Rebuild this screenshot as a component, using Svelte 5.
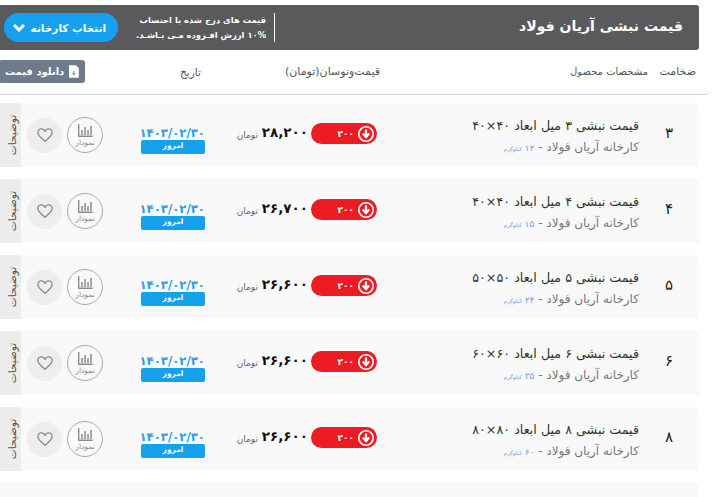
<script>
	const rows = [
		{ thick: '۳', size: '۴۰×۴۰', weight: '۱۲', price: '۲۸,۲۰۰' },
		{ thick: '۴', size: '۴۰×۴۰', weight: '۱۵', price: '۲۶,۷۰۰' },
		{ thick: '۵', size: '۵۰×۵۰', weight: '۲۴', price: '۲۶,۶۰۰' },
		{ thick: '۶', size: '۶۰×۶۰', weight: '۳۵', price: '۲۶,۶۰۰' },
		{ thick: '۸', size: '۸۰×۸۰', weight: '۶۰', price: '۲۶,۶۰۰' }
	];
</script>

<div class="page" dir="rtl">
	<header class="top">
		<h1>قیمت نبشی آریان فولاد</h1>
		<div class="top-left">
			<p class="notice">قیمت های درج شده با احتساب<br />۱۰% ارزش افـزوده مـی بـاشـد.</p>
			<button class="factory">
				انتخاب کارخانه
				<svg width="14" height="10" viewBox="0 0 14 10"><path d="M2 2l5 5 5-5" fill="none" stroke="#fff" stroke-width="3" /></svg>
			</button>
		</div>
	</header>

	<div class="heads">
		<span class="h-thick">ضخامت</span>
		<span class="h-spec">مشخصات محصول</span>
		<span class="h-price">قیمت‌ونوسان(تومان)</span>
		<span class="h-date">تاریخ</span>
		<button class="download">
			<svg width="10" height="13" viewBox="0 0 10 13"><path d="M0 0h7l3 3v10H0z" fill="#fff" /><path d="M5 6v4M3.400 8.400L5 10l1.600-1.600" fill="none" stroke="#6f7b8d" stroke-width="1" /></svg>
			دانلود قیمت
		</button>
	</div>

	{#each rows as row}
		<div class="row">
			<div class="thick">{row.thick}</div>
			<div class="product">
				<div class="name">قیمت نبشی {row.thick} میل ابعاد {row.size}</div>
				<div class="maker">کارخانه آریان فولاد - <span class="kg">{row.weight} <small>کیلوگرم</small></span></div>
			</div>
			<div class="change">
				<svg width="18" height="18" viewBox="0 0 18 18"><circle cx="9" cy="9" r="7.200" fill="none" stroke="#fff" stroke-width="1.600" /><path d="M9 4.500v7M5.800 8.500L9 12l3.200-3.500" fill="none" stroke="#fff" stroke-width="2.200" /></svg>
				<span>۲۰۰</span>
			</div>
			<div class="price">{row.price}</div>
			<div class="toman">تومان</div>
			<div class="date">
				<div class="day">۱۴۰۳/۰۲/۳۰</div>
				<div class="today">امروز</div>
			</div>
			<div class="chart">
				<svg width="15" height="13" viewBox="0 0 15 13"><path d="M.7 0v12.300h14" fill="none" stroke="#8d8d8d" stroke-width="1.400" /><path d="M3 6h2v5H3zM6 3h2v8H6zM9 6h2v5H9zM12 2h2v9h-2z" fill="#a5a5a5" /></svg>
				<span>نمودار</span>
			</div>
			<div class="heart">
				<svg width="16" height="15" viewBox="0 0 18 16"><path d="M9 14.500C4 10.500 1 8 1 5a3.800 3.800 0 0 1 8-1 3.800 3.800 0 0 1 8 1c0 3-3 5.500-8 9.500z" fill="none" stroke="#8a8a8a" stroke-width="1.500" /></svg>
			</div>
			<div class="notes"><span>توضیحات</span></div>
		</div>
	{/each}
	<div class="row last"></div>
</div>

<style>
	:global(body) {
		margin: 0;
		overflow: hidden;
		height: 497px;
		background: #fff;
	}
	.page {
		width: 699px;
		height: 497px;
		padding-top: 5px;
		box-sizing: border-box;
		font-family: "DejaVu Sans", sans-serif;
		color: #333;
	}
	.top {
		height: 45px;
		background: #5a5a5c;
		border-radius: 0 3px 3px 0;
		display: flex;
		justify-content: space-between;
		align-items: center;
		padding: 0 16px 0 4px;
	}
	h1 {
		margin: -4px 0 0;
		font-size: 14px;
		font-weight: 700;
		color: #fff;
	}
	.top-left {
		display: flex;
		align-items: center;
	}
	.notice {
		margin: 0 0 0 18px;
		padding-right: 8px;
		border-right: 1px solid #fff;
		font-size: 8.400px;
		font-weight: 700;
		line-height: 15px;
		color: #fff;
		height: 29px;
		white-space: nowrap;
	}
	.factory {
		width: 114px;
		height: 29px;
		border: 0;
		border-radius: 15px;
		background: #17a0ed;
		color: #fff;
		font: 700 10.500px "DejaVu Sans", sans-serif;
		display: flex;
		align-items: center;
		justify-content: space-between;
		padding: 0 12px 0 8px;
		white-space: nowrap;
	}
	.heads {
		height: 45px;
		width: 710px;
		margin-left: -11px;
		box-sizing: border-box;
		transform: translateX(11px);
		border-bottom: 1.500px solid #d2d2d2;
		border-radius: 0 0 5px 0;
		font-size: 10px;
		color: #555;
		display: grid;
		grid-template-columns: 48px 268px 179px 60px 1fr;
		align-items: center;
		padding-right: 14px;
	}
	.heads span {
		white-space: nowrap;
		margin-top: -1px;
	}
	.h-thick {
		grid-column: 1;
		font-size: 11px;
	}
	.h-spec { grid-column: 2; }
	.h-price {
		grid-column: 3;
		font-size: 11px;
		letter-spacing: 0.2px;
	}
	.h-date {
		grid-column: 4;
		font-size: 10.500px;
	}
	.download {
		grid-column: 5;
		justify-self: end;
		margin-left: -1px;
		width: 86px;
		height: 23px;
		margin-top: -1px;
		border: 0;
		border-radius: 3px;
		background: #6f7b8d;
		color: #fff;
		font: 700 10px "DejaVu Sans", sans-serif;
		display: flex;
		align-items: center;
		gap: 5px;
		padding: 0 6px;
		white-space: nowrap;
		overflow: hidden;
	}
	.row {
		height: 64px;
		margin-top: 12px;
		background: #f9f9f9;
		border-radius: 0 3px 3px 0;
		display: flex;
		align-items: center;
		overflow: hidden;
	}
	.row.last {
		height: 14px;
	}
	.heads + .row {
		margin-top: 8px;
	}
	.thick {
		width: 60px;
		margin-top: -4px;
		text-align: center;
		font-size: 15px;
		color: #222;
	}
	.product {
		width: 262px;
		flex: none;
		margin-top: 2px;
	}
	.name {
		font-size: 12.700px;
		color: #333;
		white-space: nowrap;
	}
	.maker {
		margin-top: 7px;
		font-size: 12px;
		color: #777;
		white-space: nowrap;
	}
	.kg {
		font-size: 9px;
		color: #6aa5f0;
	}
	.kg small {
		font-size: 5.500px;
	}
	.change {
		width: 66px;
		height: 21px;
		flex: none;
		margin-top: -3px;
		border-radius: 11px;
		background: #ed1c24;
		color: #fff;
		font-size: 9px;
		font-weight: 700;
		display: flex;
		align-items: center;
		gap: 3px;
		padding-right: 2px;
		box-sizing: border-box;
	}
	.price {
		width: 47px;
		flex: none;
		margin-right: 3px;
		margin-top: -6px;
		font-size: 13.500px;
		font-weight: 700;
		color: #111;
		white-space: nowrap;
	}
	.toman {
		width: 29px;
		flex: none;
		padding-right: 3px;
		font-size: 9px;
		color: #666;
		white-space: nowrap;
	}
	.date {
		width: 64px;
		flex: none;
		margin-right: 24px;
		text-align: center;
		margin-top: 10px;
	}
	.day {
		font-size: 11.700px;
		font-weight: 700;
		color: #2a9be8;
		line-height: 14px;
		white-space: nowrap;
	}
	.today {
		height: 14px;
		border-radius: 2px;
		background: #15a0ec;
		color: #fff;
		font-size: 7.500px;
		font-weight: 700;
		line-height: 12px;
	}
	.chart {
		width: 34px;
		height: 34px;
		flex: none;
		margin-right: 38px;
		border: 1px solid #aaa;
		border-radius: 50%;
		display: flex;
		flex-direction: column;
		align-items: center;
		justify-content: center;
		font-size: 7.500px;
		color: #888;
		gap: 1px;
	}
	.heart {
		width: 35px;
		height: 35px;
		flex: none;
		margin-right: 5px;
		border-radius: 50%;
		background: #eee;
		display: flex;
		align-items: center;
		justify-content: center;
	}
	.notes {
		width: 21px;
		height: 64px;
		flex: none;
		margin-right: auto;
		background: #ececec;
		display: flex;
		align-items: center;
		justify-content: center;
	}
	.notes span {
		transform: rotate(-90deg);
		font-size: 10.500px;
		color: #555;
		white-space: nowrap;
		margin-left: 4px;
	}
</style>
